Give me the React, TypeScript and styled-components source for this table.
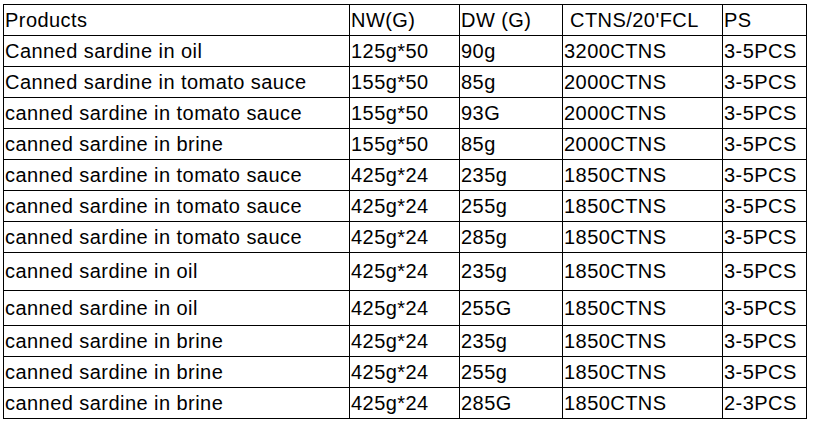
import React from "react";
import styled, { createGlobalStyle } from "styled-components";

const GlobalStyle = createGlobalStyle`
  html, body {
    margin: 0;
    padding: 0;
    background: #ffffff;
  }
  body {
    font-family: "Liberation Sans", Arial, sans-serif;
  }
`;

const Page = styled.div`
  padding: 4px 0 0 3px;
  background: #ffffff;
  width: 817px;
  height: 424px;
  box-sizing: border-box;
`;

const Grid = styled.div<{ $rows: string }>`
  display: grid;
  grid-template-columns: 346px 110px 103px 160px 84px;
  grid-template-rows: ${(p) => p.$rows};
  width: max-content;
  border-top: 1px solid #000;
  border-left: 1px solid #000;
`;

const Cell = styled.div`
  box-sizing: border-box;
  border-right: 1px solid #000;
  border-bottom: 1px solid #000;
  padding: 0 0 0 1px;
  display: flex;
  align-items: center;
  font-size: 20px;
  letter-spacing: 0.45px;
  color: #000;
  white-space: pre;
  overflow: hidden;
`;

const headers = ["Products", "NW(G)", "DW (G)", " CTNS/20'FCL", "PS"];

const rows: [string, string, string, string, string][] = [
  ["Canned sardine in oil", "125g*50", "90g", "3200CTNS", "3-5PCS"],
  ["Canned sardine in tomato sauce", "155g*50", "85g", "2000CTNS", "3-5PCS"],
  ["canned sardine in tomato sauce", "155g*50", "93G", "2000CTNS", "3-5PCS"],
  ["canned sardine in brine", "155g*50", "85g", "2000CTNS", "3-5PCS"],
  ["canned sardine in tomato sauce", "425g*24", "235g", "1850CTNS", "3-5PCS"],
  ["canned sardine in tomato sauce", "425g*24", "255g", "1850CTNS", "3-5PCS"],
  ["canned sardine in tomato sauce", "425g*24", "285g", "1850CTNS", "3-5PCS"],
  ["canned sardine in oil", "425g*24", "235g", "1850CTNS", "3-5PCS"],
  ["canned sardine in oil", "425g*24", "255G", "1850CTNS", "3-5PCS"],
  ["canned sardine in brine", "425g*24", "235g", "1850CTNS", "3-5PCS"],
  ["canned sardine in brine", "425g*24", "255g", "1850CTNS", "3-5PCS"],
  ["canned sardine in brine", "425g*24", "285G", "1850CTNS", "2-3PCS"],
];

const rowHeights = [31, 31, 31, 31, 31, 31, 31, 31, 38, 35, 31, 31, 31];

export default function App() {
  return (
    <>
      <GlobalStyle />
      <Page>
        <Grid $rows={rowHeights.map((h) => `${h}px`).join(" ")}>
          {headers.map((h, i) => (
            <Cell key={`h${i}`}>{h}</Cell>
          ))}
          {rows.map((r, ri) =>
            r.map((c, ci) => <Cell key={`${ri}-${ci}`}>{c}</Cell>)
          )}
        </Grid>
      </Page>
    </>
  );
}
